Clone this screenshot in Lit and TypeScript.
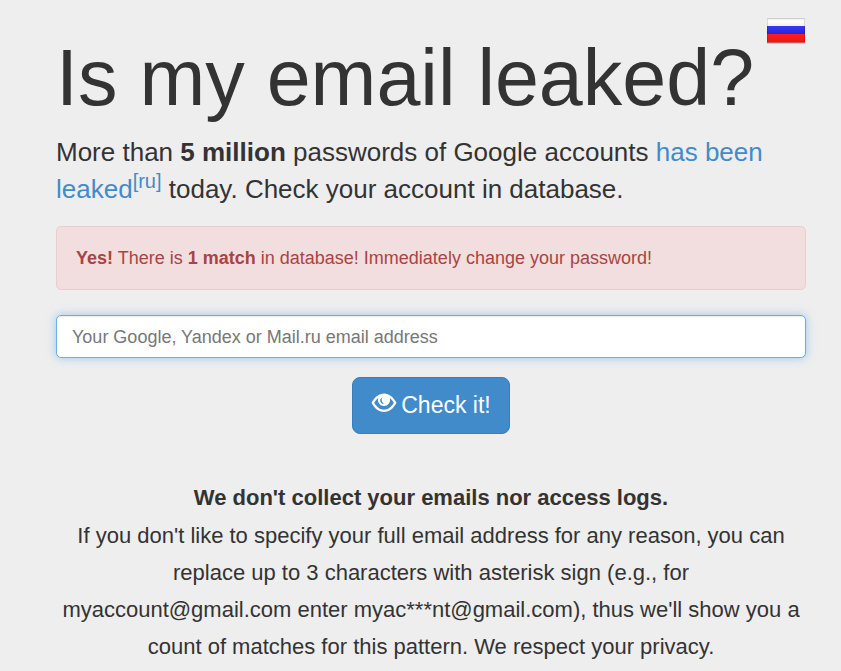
import { LitElement, html, css } from "lit";
import { customElement } from "lit/decorators.js";

@customElement("app-root")
export class AppRoot extends LitElement {
  static styles = css`
    :host {
      display: block;
      min-height: 100vh;
      box-sizing: border-box;
      padding: 16px 35px 0 56px;
      background: #eeeeee;
      color: #333333;
      font-family: "Liberation Sans", Arial, sans-serif;
      font-size: 18px;
      line-height: 26px;
    }
    * { box-sizing: border-box; }
    a { color: #428bca; text-decoration: none; }
    .head { display: flex; justify-content: space-between; align-items: flex-start; }
    h1 { margin: 22px 0 0; font-size: 79px; line-height: 79px; font-weight: 400; white-space: nowrap; }
    .flag { display: block; flex: none; width: 40px; height: 30px; }
    .lead { margin: 17px 0 0; font-size: 26px; line-height: 37px; }
    sup { font-size: 20px; line-height: 0; vertical-align: 10px; }
    .alert { margin: 18px 0 0; padding: 18px 19px; border: 1px solid #ebccd1; border-radius: 5px; background: #f2dede; color: #a94442; }
    form { margin: 25px 0 0; display: flex; flex-direction: column; align-items: center; gap: 19px; }
    input { width: 100%; height: 43px; padding: 1px 15px 0; border: 1px solid #66afe9; border-radius: 5px; outline: none; background: #ffffff; color: #555555; font: inherit; box-shadow: inset 0 1px 1px rgba(0, 0, 0, 0.08), 0 0 10px rgba(102, 175, 233, 0.6); }
    input::placeholder { color: #777777; opacity: 1; }
    button { display: flex; align-items: center; gap: 4px; height: 57px; padding: 0 18px 2px; border: 1px solid #357ebd; border-radius: 8px; background: #428bca; color: #ffffff; font: inherit; font-size: 23px; }
    .eye { width: 26px; height: 20px; margin-bottom: 4px; }
    .note { margin: 45px 0 0; font-size: 22px; line-height: 37px; text-align: center; }
    .note b { display: block; padding-bottom: 1px; }
  `;

  render() {
    return html`
      <main>
        <header class="head">
          <h1>Is my email leaked?</h1>
          <a href="#ru" aria-label="Русский">
            <svg class="flag" viewBox="0 0 40 30" aria-hidden="true">
              <defs>
                <linearGradient id="white" x2="0" y2="1">
                  <stop offset="0" stop-color="#e9e9e9" />
                  <stop offset="0.4" stop-color="#ffffff" />
                  <stop offset="1" stop-color="#f0f0f0" />
                </linearGradient>
                <linearGradient id="blue" x2="0" y2="1">
                  <stop offset="0" stop-color="#3a3aec" />
                  <stop offset="1" stop-color="#2424dc" />
                </linearGradient>
                <linearGradient id="red" x2="0" y2="1">
                  <stop offset="0" stop-color="#ff1c1c" />
                  <stop offset="1" stop-color="#ee1414" />
                </linearGradient>
              </defs>
              <rect x="1" y="26" width="38" height="2" fill="#000000" fill-opacity="0.16" />
              <rect x="1" y="2" width="38" height="8" fill="url(#white)" />
              <rect x="1" y="10" width="38" height="8" fill="url(#blue)" />
              <rect x="1" y="18" width="38" height="8.5" fill="url(#red)" />
              <rect x="1.5" y="2.5" width="37" height="24" fill="none" stroke="#000000" stroke-opacity="0.12" />
            </svg>
          </a>
        </header>
        <p class="lead">More than <b>5 million</b> passwords of Google accounts <a href="#news">has been leaked</a><sup><a href="#news-ru">[ru]</a></sup> today. Check your account in database.</p>
        <div class="alert" role="alert"><b>Yes!</b> There is <b>1 match</b> in database! Immediately change your password!</div>
        <form @submit=${(e: Event) => e.preventDefault()}>
          <input type="text" aria-label="Your Google, Yandex or Mail.ru email address" placeholder="Your Google, Yandex or Mail.ru email address" />
          <button type="submit">
            <svg class="eye" viewBox="0 0 26 20" aria-hidden="true">
              <path fill="#ffffff" fill-rule="evenodd" d="M0.5 9.8C3.5 4 8 0.5 13 0.500S22.500 4 25.500 9.800C22.500 15.500 18.500 19 13 19S3.500 15.500 0.500 9.800ZM3.200 9.800C5.500 14 9 16.800 13 16.800S20.500 14 22.800 9.800C21.600 7.800 20.300 6.200 18.800 5A6.100 6.100 0 1 1 7.200 5C5.700 6.200 4.400 7.800 3.200 9.800Z" />
              <path d="M11.500 4.500C9.600 5.200 8.900 6.800 9.400 8.500C9.900 10.300 11.500 11.200 13.300 10.700C11.900 10.100 11.100 9.200 10.800 7.800C10.500 6.400 10.700 5.500 11.500 4.500Z" fill="#428bca" />
            </svg>
            Check it!
          </button>
        </form>
        <p class="note"><b>We don't collect your emails nor access logs.</b>If you don't like to specify your full email address for any reason, you can replace up to 3 characters with asterisk sign (e.g., for myaccount@gmail.com enter myac***nt@gmail.com), thus we'll show you a count of matches for this pattern. We respect your privacy.</p>
      </main>
    `;
  }
}
